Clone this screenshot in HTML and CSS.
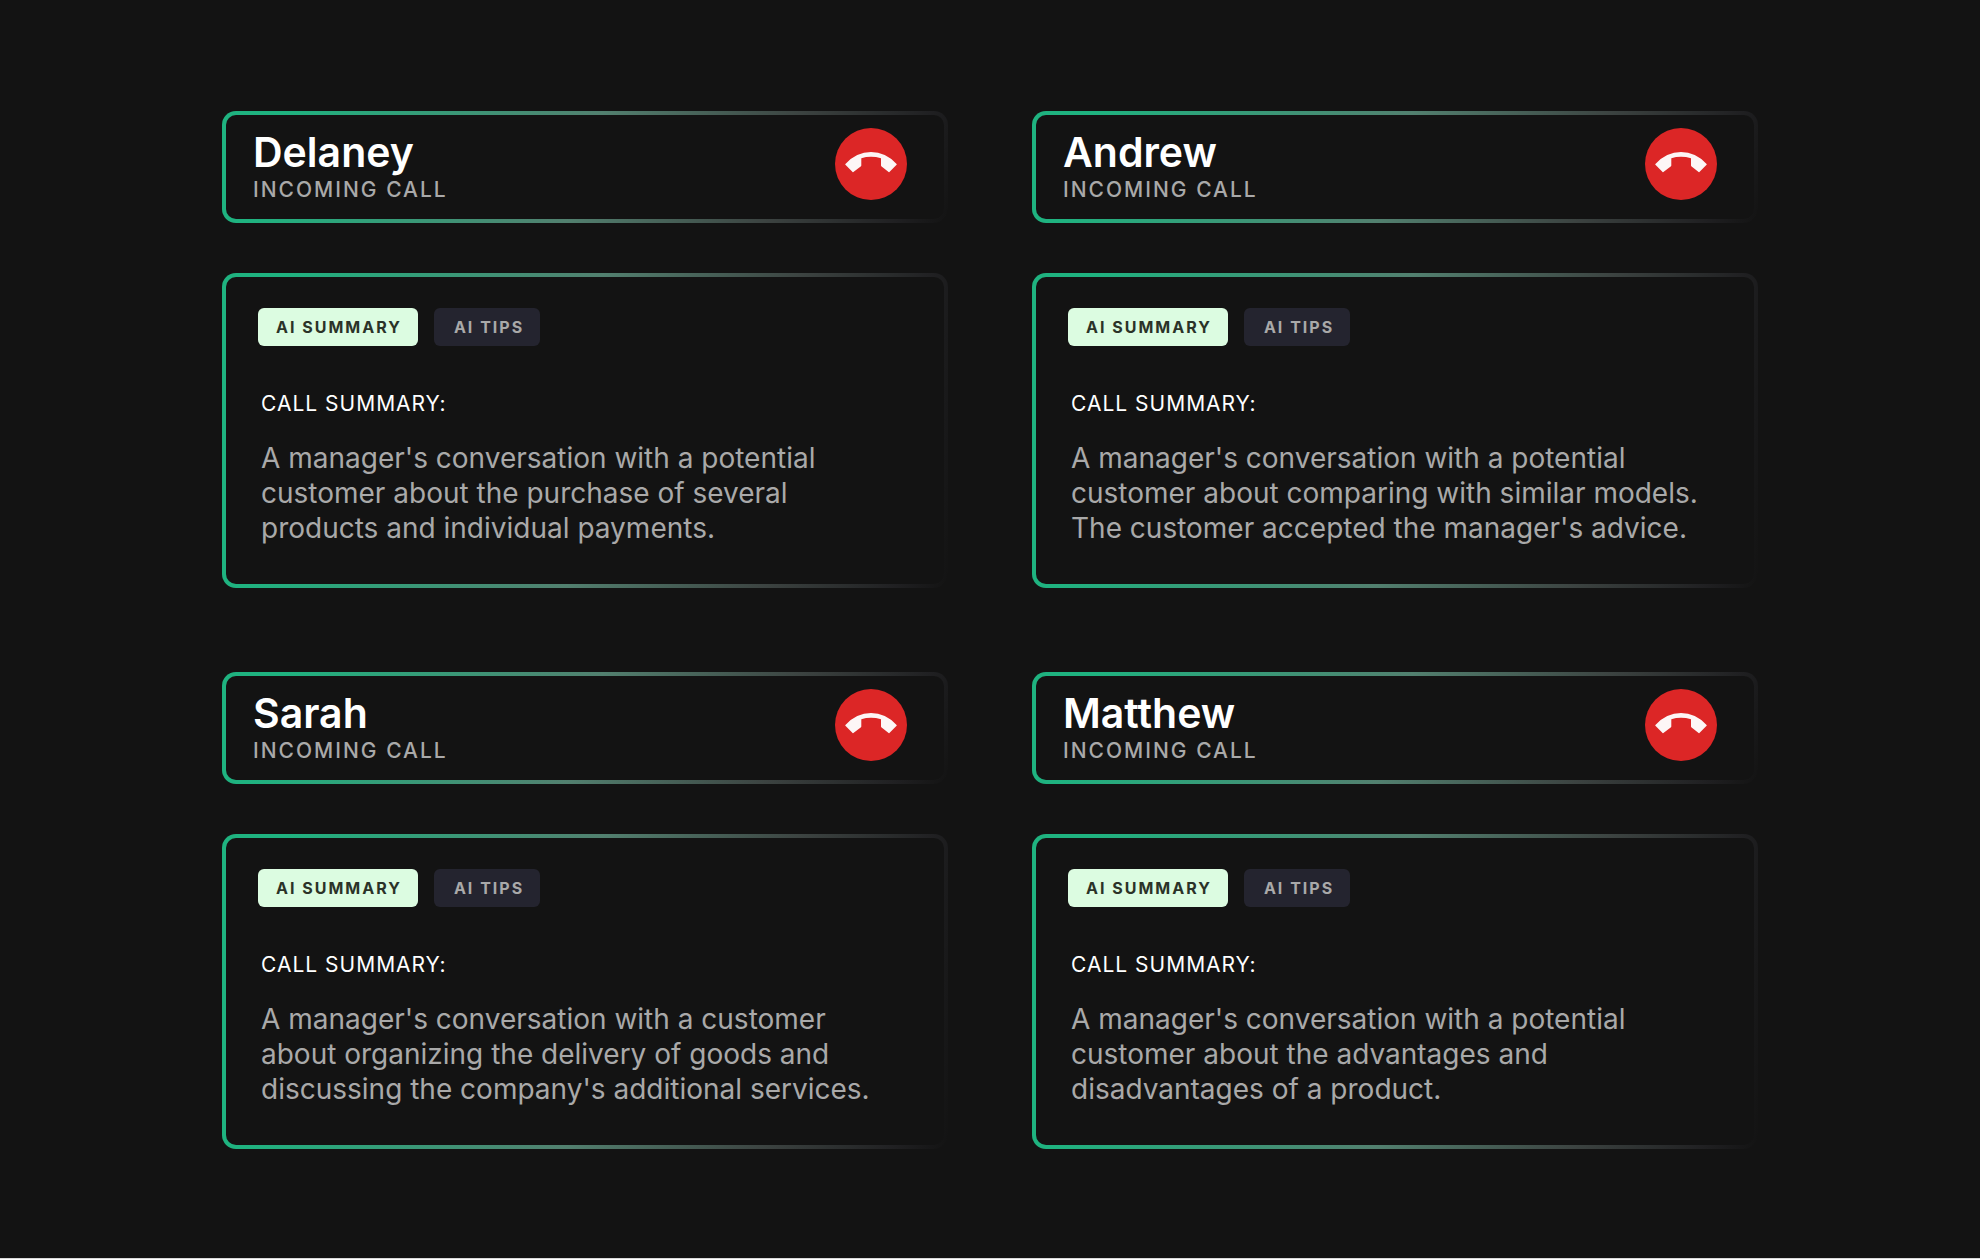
FILE: index.html
```html
<!DOCTYPE html>
<html lang="en">
<head>
<meta charset="utf-8">
<meta name="viewport" content="width=device-width, initial-scale=1">
<title>Incoming calls</title>
<link rel="stylesheet" href="styles.css">
</head>
<body>
<svg class="sprite" aria-hidden="true">
  <symbol id="hang-up" viewBox="0 0 72 72">
    <path d="M10.400 35.900Q21.500 24 36 24T61.600 35.900Q62 36.300 61.600 36.700L54.400 44Q54 44.400 53.600 44.100L46.300 38.200Q46 37.900 46 37.500V30.200Q41 28.800 36 28.800T26.300 30.200V37.500Q26.300 37.900 26 38.200L18.400 44.100Q18 44.400 17.600 44L10.400 36.700Q10 36.300 10.400 35.900Z"/>
  </symbol>
</svg>
<main class="board">
  <article class="call">
    <header class="panel caller">
      <div>
        <h2 class="name">Delaney</h2>
        <p class="status">INCOMING CALL</p>
      </div>
      <button class="hang-up" type="button" aria-label="Decline call from Delaney"><svg class="icon" aria-hidden="true"><use href="#hang-up"/></svg></button>
    </header>
    <section class="panel summary">
      <div class="tabs" role="tablist">
        <button class="tab active" type="button" role="tab" aria-selected="true">AI SUMMARY</button>
        <button class="tab" type="button" role="tab" aria-selected="false">AI TIPS</button>
      </div>
      <h3 class="label">CALL SUMMARY:</h3>
      <p class="text">A manager's conversation with a potential<br>customer about the purchase of several<br>products and individual payments.</p>
    </section>
  </article>
  <article class="call">
    <header class="panel caller">
      <div>
        <h2 class="name">Andrew</h2>
        <p class="status">INCOMING CALL</p>
      </div>
      <button class="hang-up" type="button" aria-label="Decline call from Andrew"><svg class="icon" aria-hidden="true"><use href="#hang-up"/></svg></button>
    </header>
    <section class="panel summary">
      <div class="tabs" role="tablist">
        <button class="tab active" type="button" role="tab" aria-selected="true">AI SUMMARY</button>
        <button class="tab" type="button" role="tab" aria-selected="false">AI TIPS</button>
      </div>
      <h3 class="label">CALL SUMMARY:</h3>
      <p class="text">A manager's conversation with a potential<br>customer about comparing with similar models.<br>The customer accepted the manager's advice.</p>
    </section>
  </article>
  <article class="call">
    <header class="panel caller">
      <div>
        <h2 class="name">Sarah</h2>
        <p class="status">INCOMING CALL</p>
      </div>
      <button class="hang-up" type="button" aria-label="Decline call from Sarah"><svg class="icon" aria-hidden="true"><use href="#hang-up"/></svg></button>
    </header>
    <section class="panel summary">
      <div class="tabs" role="tablist">
        <button class="tab active" type="button" role="tab" aria-selected="true">AI SUMMARY</button>
        <button class="tab" type="button" role="tab" aria-selected="false">AI TIPS</button>
      </div>
      <h3 class="label">CALL SUMMARY:</h3>
      <p class="text">A manager's conversation with a customer<br>about organizing the delivery of goods and<br>discussing the company's additional services.</p>
    </section>
  </article>
  <article class="call">
    <header class="panel caller">
      <div>
        <h2 class="name">Matthew</h2>
        <p class="status">INCOMING CALL</p>
      </div>
      <button class="hang-up" type="button" aria-label="Decline call from Matthew"><svg class="icon" aria-hidden="true"><use href="#hang-up"/></svg></button>
    </header>
    <section class="panel summary">
      <div class="tabs" role="tablist">
        <button class="tab active" type="button" role="tab" aria-selected="true">AI SUMMARY</button>
        <button class="tab" type="button" role="tab" aria-selected="false">AI TIPS</button>
      </div>
      <h3 class="label">CALL SUMMARY:</h3>
      <p class="text">A manager's conversation with a potential<br>customer about the advantages and<br>disadvantages of a product.</p>
    </section>
  </article>
</main>
</body>
</html>
```
FILE: styles.css
```css
:root {
  --page: #131313;
  --green: #1fb380;
  --muted: #a9a9a9;
}

* {
  box-sizing: border-box;
  margin: 0;
}

body {
  background: var(--page);
  color: #fff;
  font-family: Inter, "Liberation Sans", sans-serif;
}

.sprite {
  display: none;
}

.board {
  display: grid;
  grid-template-columns: repeat(2, minmax(0, 1fr));
  align-content: start;
  gap: 84px;
  min-height: 100vh;
  padding: 111px 222px 84px;
  border-bottom: 1px solid #d8d8d8;
}

.call {
  display: flex;
  flex-direction: column;
  gap: 50px;
}

/* The outline fades from green at the left to the page colour at the lower right. */
.panel {
  --angle: 97deg;
  border: 4px solid transparent;
  border-radius: 14px;
  background:
    linear-gradient(var(--page), var(--page)) padding-box,
    linear-gradient(var(--angle), var(--green) 0%, var(--green) 8%, #52806f 50%, #3c4341 76%, #202022 93%, var(--page) 100%) border-box;
}

.caller {
  --angle: 108deg;
  display: flex;
  justify-content: space-between;
  align-items: flex-start;
  padding: 13px 37px 15px 27px;
}

.name {
  font-size: 41px;
  font-weight: 600;
  line-height: 48px;
}

.status {
  color: var(--muted);
  font-size: 21px;
  font-weight: 500;
  line-height: 28px;
  letter-spacing: 2px;
}

.hang-up {
  width: 72px;
  height: 72px;
  padding: 0;
  border: 0;
  border-radius: 50%;
  background: #dc2626;
  color: #fdf6f6;
  cursor: pointer;
}

.icon {
  display: block;
  width: 72px;
  height: 72px;
  fill: currentColor;
}

.summary {
  padding: 31px 32px 38px;
}

.tabs {
  display: flex;
  gap: 16px;
}

.tab {
  height: 38px;
  padding: 0 16px 0 20px;
  border: 0;
  border-radius: 6px;
  background: #24242f;
  color: var(--muted);
  font: 700 16px/38px Inter, "Liberation Sans", sans-serif;
  letter-spacing: 2px;
  cursor: pointer;
}

.tab.active {
  padding-left: 18px;
  background: #dcfce1;
  color: #2b3328;
}

.label {
  margin: 45px 3px 0;
  font-size: 21px;
  font-weight: 400;
  line-height: 26px;
  letter-spacing: 1px;
}

.text {
  margin: 24px 3px 0;
  color: var(--muted);
  font-size: 28px;
  font-weight: 400;
  line-height: 35px;
}
```
